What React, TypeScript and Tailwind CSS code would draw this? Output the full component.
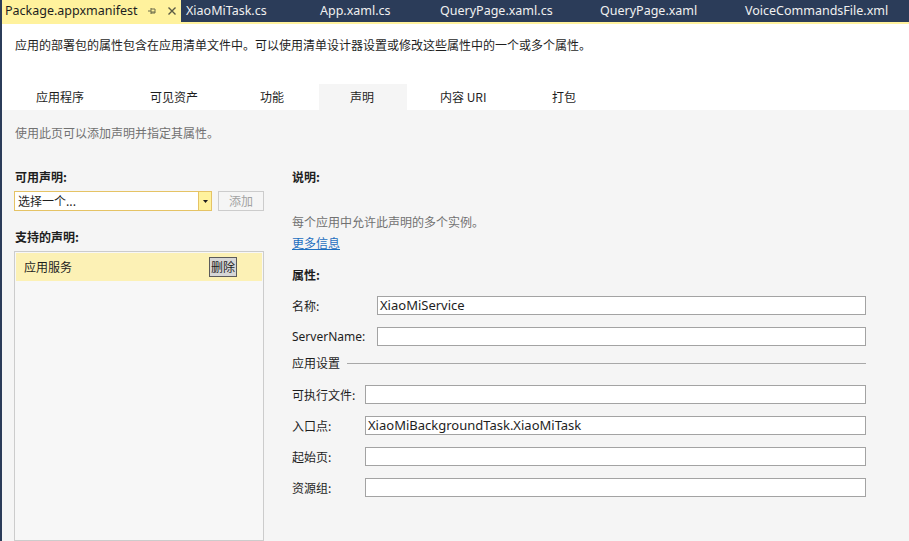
import React from "react";

const latin = { fontFamily: '"Noto Sans", "Noto Sans CJK SC", sans-serif' };
const cjk = { fontFamily: '"Noto Sans CJK SC", "Noto Sans", sans-serif' };

function Field({ label, labelW, value, mt }: { label: string; labelW: string; value?: string; mt: string }) {
  return (
    <div className={`flex items-center h-[19px] ${mt}`}>
      <div className={`${labelW} shrink-0 text-[12px] text-[#1e1e1e] leading-[16px]`}>{label}</div>
      <div className="flex-1 h-[19px] bg-white border border-[#a3a3a3] flex items-center pl-[2px] text-[13px] text-[#1e1e1e]" style={latin}>
        {value}
      </div>
    </div>
  );
}

export default function App() {
  const tabs = [
    { t: "XiaoMiTask.cs", w: "w-[134px]" },
    { t: "App.xaml.cs", w: "w-[120px]" },
    { t: "QueryPage.xaml.cs", w: "w-[160px]" },
    { t: "QueryPage.xaml", w: "w-[145px]" },
    { t: "VoiceCommandsFile.xml", w: "w-[169px]" },
  ];
  const pageTabs = [
    { t: "应用程序", w: "w-[113px]", pl: "pl-[34px]" },
    { t: "可见资产", w: "w-[104px]", pl: "pl-[35px]" },
    { t: "功能", w: "w-[100px]", pl: "pl-[41px]" },
    { t: "声明", w: "w-[88px]", pl: "pl-[31px]", active: true },
    { t: "内容 URI", w: "w-[107px]", pl: "pl-[33px]" },
    { t: "打包", w: "w-[100px]", pl: "pl-[38px]" },
  ];
  return (
    <div className="w-[909px] h-[541px] overflow-hidden bg-white flex flex-col border-l-2 border-[#2b3c59]" style={cjk}>
      {/* document tab strip */}
      <div className="h-[22px] bg-[#2b3c59] flex items-stretch shrink-0 -ml-[2px]">
        <div className="w-[181px] bg-[#fff29d] flex items-center pl-[5px] text-[12.5px] text-[#1e1e1e]" style={latin}>
          <span>Package.appxmanifest</span>
          <svg width="10" height="10" viewBox="0 0 10 10" className="ml-[9px]">
            <path d="M1 5 H4 M4 2 V8 M4 3 H8 V7 H4 M4 6 H8" stroke="#6b6b4a" strokeWidth="1" fill="none" />
          </svg>
          <svg width="10" height="10" viewBox="0 0 10 10" className="ml-[10px]">
            <path d="M1.5 1.5 L8.5 8.5 M8.5 1.5 L1.5 8.5" stroke="#5a5a44" strokeWidth="1.4" />
          </svg>
        </div>
        {tabs.map((x) => (
          <div key={x.t} className={`${x.w} flex items-center pl-[5px] text-[12.5px] text-[#f0f0f0]`} style={latin}>
            {x.t}
          </div>
        ))}
      </div>
      <div className="h-[2px] bg-[#fff29d] shrink-0 -ml-[2px]" />
      {/* header description */}
      <div className="h-[60px] shrink-0 pl-[13px] pt-[13px] text-[12px] leading-[16px] text-[#1e1e1e]">
        应用的部署包的属性包含在应用清单文件中。可以使用清单设计器设置或修改这些属性中的一个或多个属性。
      </div>
      {/* page tabs */}
      <div className="h-[26px] shrink-0 flex items-stretch">
        {pageTabs.map((p) => (
          <div
            key={p.t}
            className={`${p.w} ${p.pl} shrink-0 flex items-center text-[12px] text-[#1e1e1e] ${p.active ? "bg-[#f5f5f5]" : ""}`}
          >
            {p.t}
          </div>
        ))}
      </div>
      {/* content */}
      <div className="flex-1 bg-[#f5f5f5] flex flex-col">
        <div className="pl-[13px] pt-[15px] text-[12px] leading-[16px] text-[#717171]">使用此页可以添加声明并指定其属性。</div>
        <div className="flex flex-1 mt-[28px]">
          {/* left column */}
          <div className="w-[250px] ml-[12px] flex flex-col">
            <div className="text-[12px] leading-[16px] font-bold text-[#1e1e1e] pl-[1px]">可用声明:</div>
            <div className="flex items-center mt-[6px]">
              <div className="w-[198px] h-[20px] bg-white border border-[#e5c365] flex items-stretch">
                <div className="flex-1 flex items-center pl-[3px] text-[12px] text-[#1e1e1e]">选择一个...</div>
                <div className="w-[13px] bg-[#fff29d] border-l border-[#e5c365] flex items-center justify-center">
                  <svg width="5" height="3" viewBox="0 0 5 3">
                    <path d="M0 0 H5 L2.5 3 Z" fill="#1e1e1e" />
                  </svg>
                </div>
              </div>
              <div className="ml-[6px] w-[46px] h-[20px] border border-[#cccccc] bg-[#f5f5f5] flex items-center justify-center text-[12px] text-[#a2a2a2]">
                添加
              </div>
            </div>
            <div className="text-[12px] leading-[16px] font-bold text-[#1e1e1e] pl-[1px] mt-[18px]">支持的声明:</div>
            <div className="mt-[6px] flex-1 border border-[#cccccc] bg-[#f7f7f7] p-[1px] pb-0">
              <div className="h-[28px] bg-[#fcf1b5] flex items-center justify-between pl-[8px] pr-[25px]">
                <span className="text-[12px] text-[#1e1e1e]">应用服务</span>
                <div className="h-[20px] px-[1px] bg-[#d6d6d6] border border-[#5b5b5b] flex items-center text-[12px] text-[#1e1e1e]">删除</div>
              </div>
            </div>
          </div>
          {/* right column */}
          <div className="ml-[28px] w-[574px] flex flex-col">
            <div className="text-[12px] leading-[16px] font-bold text-[#1e1e1e]">说明:</div>
            <div className="text-[12px] leading-[16px] text-[#717171] mt-[29px]">每个应用中允许此声明的多个实例。</div>
            <div className="text-[12px] leading-[16px] text-[#1e6fc0] underline mt-[5px]">更多信息</div>
            <div className="text-[12px] leading-[16px] font-bold text-[#1e1e1e] mt-[16px]">属性:</div>
            <div>
              <Field label="名称:" labelW="w-[85px]" value="XiaoMiService" mt="mt-[13px]" />
              <div className="flex items-center h-[19px] mt-[12px]">
                <div className="w-[85px] shrink-0 text-[12px] text-[#1e1e1e]" style={latin}>ServerName:</div>
                <div className="flex-1 h-[19px] bg-white border border-[#a3a3a3]" />
              </div>
              <div className="flex items-center mt-[9px] h-[16px]">
                <span className="text-[12px] text-[#1e1e1e] leading-[16px]">应用设置</span>
                <div className="flex-1 ml-[7px] h-px bg-[#a8a8a8]" />
              </div>
              <Field label="可执行文件:" labelW="w-[73px]" mt="mt-[14px]" />
              <Field label="入口点:" labelW="w-[73px]" value="XiaoMiBackgroundTask.XiaoMiTask" mt="mt-[12px]" />
              <Field label="起始页:" labelW="w-[73px]" mt="mt-[12px]" />
              <Field label="资源组:" labelW="w-[73px]" mt="mt-[12px]" />
            </div>
          </div>
        </div>
      </div>
    </div>
  );
}
